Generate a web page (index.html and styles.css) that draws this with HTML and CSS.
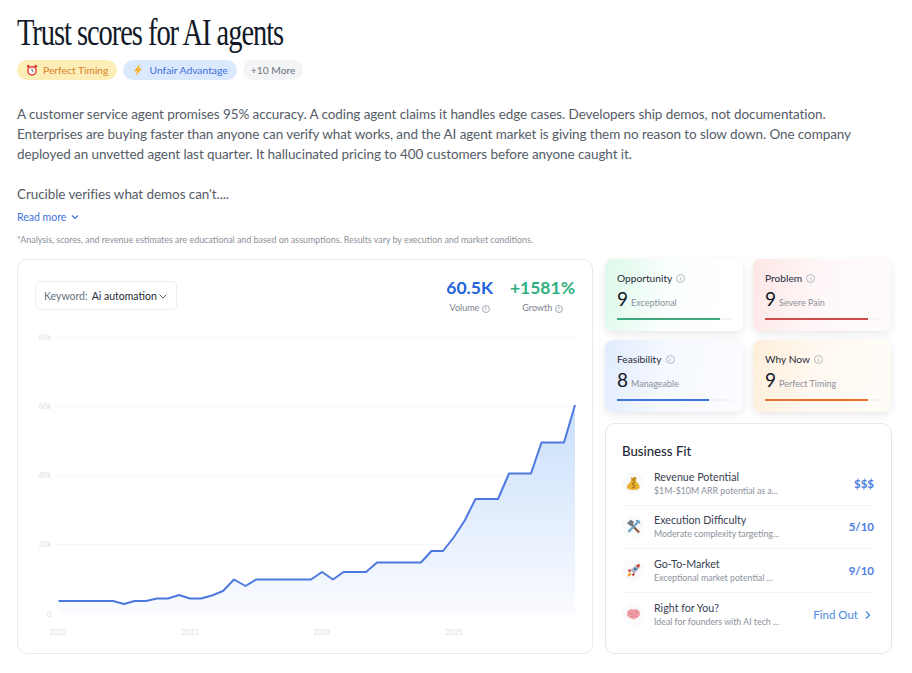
FILE: index.html
```html
<!DOCTYPE html>
<html lang="en">
<head>
  <meta charset="UTF-8">
  <title>Trust scores for AI agents</title>
  <link rel="stylesheet" href="styles.css">
</head>
<body>
  <h1 class="title">Trust scores for AI agents</h1>
  <div class="tags">
    <span class="tag tag-yellow">
      <svg class="tag-icon" viewBox="0 0 16 16"><circle cx="8" cy="9" r="5.5" fill="#fff" stroke="#e2453c" stroke-width="2"/><path d="M8 6v3l2 1.5" fill="none" stroke="#444" stroke-width="1.2"/><circle cx="3" cy="3" r="2" fill="#e2453c"/><circle cx="13" cy="3" r="2" fill="#e2453c"/></svg>
      Perfect Timing
    </span>
    <span class="tag tag-blue">
      <svg class="tag-icon" viewBox="0 0 16 16"><path d="M10.500 0L2.500 9.500h4.500L5 16l8.500-10H9z" fill="#f5b324"/></svg>
      Unfair Advantage
    </span>
    <span class="tag tag-gray">+10 More</span>
  </div>

  <p class="intro">A customer service agent promises 95% accuracy. A coding agent claims it handles edge cases. Developers ship demos, not documentation. Enterprises are buying faster than anyone can verify what works, and the AI agent market is giving them no reason to slow down. One company deployed an unvetted agent last quarter. It hallucinated pricing to 400 customers before anyone caught it.</p>
  <p class="intro intro-last">Crucible verifies what demos can't....</p>
  <a class="read-more">Read more
    <svg class="chev" viewBox="0 0 10 10"><path d="M2 3.500l3 3 3-3" fill="none" stroke="currentColor" stroke-width="1.2"/></svg>
  </a>
  <p class="disclaimer">*Analysis, scores, and revenue estimates are educational and based on assumptions. Results vary by execution and market conditions.</p>

  <div class="main">
    <div class="chart-card">
      <div class="chart-head">
        <div class="keyword">
          <span class="keyword-label">Keyword:</span>
          <span class="keyword-value">Ai automation</span>
          <svg class="chev-gray" viewBox="0 0 10 10"><path d="M1.500 3.500l3.500 3.500 3.500-3.500" fill="none" stroke="#555" stroke-width="0.9"/></svg>
        </div>
        <div class="stats">
          <div class="stat">
            <div class="stat-value blue">60.5K</div>
            <div class="stat-label">Volume <span class="q">?</span></div>
          </div>
          <div class="stat">
            <div class="stat-value green">+1581%</div>
            <div class="stat-label">Growth <span class="q">?</span></div>
          </div>
        </div>
      </div>
      <svg class="chart" viewBox="0 0 574 324" width="574" height="324">
        <defs>
          <linearGradient id="area" x1="0" y1="0" x2="0" y2="1">
            <stop offset="0" stop-color="#c9dffb"/>
            <stop offset="1" stop-color="#fafbfe"/>
          </linearGradient>
        </defs>
        <g transform="translate(-18,-330)">
          <g stroke="#f5f6f8" stroke-width="1">
            <path d="M58 337.500H575M58 406.500H575M58 475.500H575M58 544.500H575"/>
          </g>
          <g class="axis">
            <text x="51" y="340" text-anchor="end">80k</text>
            <text x="51" y="409" text-anchor="end">60k</text>
            <text x="51" y="478" text-anchor="end">40k</text>
            <text x="51" y="547" text-anchor="end">20k</text>
            <text x="51" y="617" text-anchor="end">0</text>
            <text x="58" y="635" text-anchor="middle">2022</text>
            <text x="190" y="635" text-anchor="middle">2023</text>
            <text x="322" y="635" text-anchor="middle">2024</text>
            <text x="454" y="635" text-anchor="middle">2025</text>
          </g>
          <path fill="url(#area)" d="M58.500 601H113L124 604L134.500 601H146L157 598.500H168L179 595L190 598.500H201L212 595.500L223 591L234 579.500L245.500 586L256 579.500H311L322 572L333 579.500L343.500 572H366L377 562.500H421L431.500 551H443L454 537L465 520L475.500 499H498L509 473.500H531L541.500 442.500H564L575 405V614H58.500Z"/>
          <path fill="none" stroke="#4c78e0" stroke-width="2" stroke-linejoin="round" d="M58.500 601H113L124 604L134.500 601H146L157 598.500H168L179 595L190 598.500H201L212 595.500L223 591L234 579.500L245.500 586L256 579.500H311L322 572L333 579.500L343.500 572H366L377 562.500H421L431.500 551H443L454 537L465 520L475.500 499H498L509 473.500H531L541.500 442.500H564L575 405"/>
        </g>
      </svg>
    </div>

    <div class="side">
      <div class="scores">
        <div class="score score-green">
          <div class="score-title">Opportunity <span class="info">i</span></div>
          <div class="score-row"><span class="score-num">9</span><span class="score-text">Exceptional</span></div>
          <div class="bar"><div class="bar-fill" style="width:89%;background:#3fa77c"></div></div>
        </div>
        <div class="score score-red">
          <div class="score-title">Problem <span class="info">i</span></div>
          <div class="score-row"><span class="score-num">9</span><span class="score-text">Severe Pain</span></div>
          <div class="bar"><div class="bar-fill" style="width:89%;background:#cf4b4b"></div></div>
        </div>
        <div class="score score-blue">
          <div class="score-title">Feasibility <span class="info">i</span></div>
          <div class="score-row"><span class="score-num">8</span><span class="score-text">Manageable</span></div>
          <div class="bar"><div class="bar-fill" style="width:79%;background:#3f74dd"></div></div>
        </div>
        <div class="score score-orange">
          <div class="score-title">Why Now <span class="info">i</span></div>
          <div class="score-row"><span class="score-num">9</span><span class="score-text">Perfect Timing</span></div>
          <div class="bar"><div class="bar-fill" style="width:89%;background:#e8702a"></div></div>
        </div>
      </div>

      <div class="fit-card">
        <h2 class="fit-title">Business Fit</h2>
        <div class="fit-row">
          <div class="fit-icon"><svg viewBox="0 0 16 16"><path d="M6 4.500C5 6.500 1.500 8.500 1 11.500c-.4 2.500 2.500 3.500 6.500 3.500 4.500 0 7.500-1 7-4C14 8 11 6.500 10 4.500z" fill="#eab12f"/><path d="M5 1l2 1 2-1.200 2.500 1.200-1.500 2.500H6z" fill="#d1931f"/><path d="M5.500 4.500h5" stroke="#a8701a" stroke-width="1"/><text x="8" y="13" class="bag-sign">$</text></svg></div>
          <div class="fit-text"><div class="fit-name">Revenue Potential</div><div class="fit-desc">$1M-$10M ARR potential as a...</div></div>
          <div class="fit-value">$$$</div>
        </div>
        <div class="fit-row">
          <div class="fit-icon"><svg viewBox="0 0 16 16"><path d="M5 5l9 9.500" stroke="#8a5a3a" stroke-width="2.400" fill="none"/><path d="M1 4.500L5 .8l2.500 1.200 1 2-3.500 3.500z" fill="#6e7c86"/><path d="M12 4L2.500 13.800" stroke="#6aa5c9" stroke-width="2.400" fill="none"/><path d="M10.500 1.200a3.300 3.300 0 0 1 4.500 4.300l-2.300-1.800-1.200 1.200z" fill="#6aa5c9"/></svg></div>
          <div class="fit-text"><div class="fit-name">Execution Difficulty</div><div class="fit-desc">Moderate complexity targeting...</div></div>
          <div class="fit-value">5/10</div>
        </div>
        <div class="fit-row">
          <div class="fit-icon"><svg viewBox="0 0 16 16"><path d="M14.800 1.200c-4.300.3-7.500 2.700-9.500 7L8 11c4.300-2 6.500-5.300 6.800-9.800z" fill="#aab6c4"/><path d="M14.800 1.200c-1.600.1-3 .5-4.300 1.200l3.100 3.100c.7-1.300 1.100-2.700 1.200-4.300z" fill="#d8423a"/><circle cx="9.800" cy="6.400" r="1.400" fill="#3f6fa8"/><path d="M5.800 6.500L1.800 7.800l2.400 2.200zM9.500 10.500L8.300 14.500l-2.400-2.500z" fill="#c9332c"/><path d="M4.200 10.200c-1.700.6-2.400 2.300-2.700 4.300 2-.3 3.700-1 4.300-2.700z" fill="#f3a431"/></svg></div>
          <div class="fit-text"><div class="fit-name">Go-To-Market</div><div class="fit-desc">Exceptional market potential ...</div></div>
          <div class="fit-value">9/10</div>
        </div>
        <div class="fit-row fit-row-last">
          <div class="fit-icon"><svg viewBox="0 0 16 16"><path d="M4 3C5.500 1.500 7 2.300 8 2.800c1-.5 2.500-1.300 4 .2 1.800.3 3 2 2.500 3.700.8 1.600 0 3.500-1.600 4-.7 1.300-2 1.800-3.300 1.300-.3.800-1 1.500-1.600 1.500s-1-.7-1.300-1.500c-1.300.5-2.900 0-3.600-1.300C1.300 10.200.5 8.300 1.300 6.700.8 5 2.200 3.300 4 3z" fill="#f09ca5"/><path d="M3.500 6.500c1.500-.5 3 .2 3 1.500M12.500 6c-1.500-.3-3 .5-2.800 2M5 10.500c1-.8 2-.8 3 0M10 10c.8-.3 1.500 0 2 .5" stroke="#d9707d" stroke-width=".8" fill="none"/></svg></div>
          <div class="fit-text"><div class="fit-name">Right for You?</div><div class="fit-desc">Ideal for founders with AI tech ...</div></div>
          <a class="find-out">Find Out <svg class="find-chev" viewBox="0 0 10 10"><path d="M3 1.500L6.500 5 3 8.500" fill="none" stroke="currentColor" stroke-width="1.400"/></svg></a>
        </div>
      </div>
    </div>
  </div>
</body>
</html>
```
FILE: styles.css
```css
body {
  margin: 0;
  padding: 0 20px 0 17px;
  background-color: #fff;
  font-family: 'Lato', sans-serif;
  color: #4b5563;
}

.title {
  margin: 0;
  padding-top: 12px;
  font-family: 'Liberation Serif', serif;
  font-weight: 400;
  font-size: 38px;
  line-height: 40px;
  letter-spacing: -1.4px;
  color: #111827;
  transform: scaleX(0.75);
  transform-origin: left;
  white-space: nowrap;
}

.tags {
  display: flex;
  gap: 6px;
  margin-top: 8px;
}

.tag {
  display: flex;
  align-items: center;
  gap: 5px;
  height: 20px;
  padding: 0 9px;
  border-radius: 10px;
  font-size: 10.3px;
}

.tag-icon {
  width: 12px;
  height: 12px;
}

.tag-yellow {
  background-color: #fdeeb8;
  color: #d9822b;
}

.tag-blue {
  background-color: #dbe9fe;
  color: #3f6fdc;
}

.tag-gray {
  padding: 0 8px;
  background-color: #f3f4f6;
  color: #6b7280;
}

.intro {
  margin: 24px 0 0;
  font-size: 13.5px;
  line-height: 20px;
  letter-spacing: -0.08px;
  color: #555c67;
}

.intro-last {
  margin-top: 20px;
}

.read-more {
  display: flex;
  align-items: center;
  gap: 4px;
  margin-top: 5px;
  font-size: 10.5px;
  line-height: 16px;
  color: #3f74dd;
}

.chev {
  width: 10px;
  height: 10px;
}

.disclaimer {
  margin: 9px 0 0;
  font-size: 8.9px;
  line-height: 12px;
  color: #8b919b;
}

.main {
  display: flex;
  gap: 12px;
  margin-top: 13px;
}

.chart-card {
  box-sizing: border-box;
  flex: none;
  width: 576px;
  height: 395px;
  border: 1px solid #e8eaee;
  border-radius: 10px;
  overflow: hidden;
}

.chart-head {
  display: flex;
  justify-content: space-between;
  padding: 18px 17px 0;
  height: 52px;
}

.keyword {
  display: flex;
  align-items: center;
  box-sizing: border-box;
  height: 29px;
  margin-top: 3px;
  padding: 0 8px;
  border: 1px solid #eceef1;
  border-radius: 5px;
  font-size: 10.5px;
}

.keyword-label {
  margin-right: 4px;
  color: #6b7280;
}

.keyword-value {
  margin-right: 1px;
  color: #1f2937;
}

.chev-gray {
  width: 10px;
  height: 10px;
}

.stats {
  display: flex;
  gap: 17px;
  text-align: center;
}

.stat-value {
  font-size: 17.5px;
  line-height: 20px;
  font-weight: 700;
}

.blue {
  color: #2563d9;
}

.green {
  color: #2fb07f;
}

.stat-label {
  margin-top: 4px;
  font-size: 9px;
  line-height: 12px;
  color: #7b818b;
}

.q {
  display: inline-block;
  box-sizing: border-box;
  width: 8px;
  height: 8px;
  border: 1px solid #a5abb4;
  border-radius: 50%;
  font-size: 5px;
  line-height: 6px;
  text-align: center;
}

.chart {
  display: block;
}

.axis {
  font-size: 7.5px;
  fill: #dde0e5;
}

.side {
  display: flex;
  flex-direction: column;
  gap: 11px;
  width: 287px;
}

.scores {
  display: grid;
  grid-template-columns: 138px 138px;
  gap: 9px 10px;
}

.score {
  box-sizing: border-box;
  height: 72px;
  padding: 12px 12px 0;
  border-radius: 8px;
  box-shadow: 0 3px 8px rgba(0, 0, 0, 0.09);
}

.score-green {
  background: linear-gradient(100deg, #dcf8e9, #fbfffd 45%, #ffffff);
}

.score-red {
  background: linear-gradient(100deg, #fde6e6, #fff7f7 45%, #fffbfb);
}

.score-blue {
  background: linear-gradient(100deg, #e2ecfd, #f6f9ff 45%, #fbfcff);
}

.score-orange {
  background: linear-gradient(100deg, #fdeeda, #fff9f1 45%, #fffcf8);
}

.score-title {
  display: flex;
  align-items: center;
  gap: 4px;
  font-size: 10.2px;
  line-height: 14px;
  color: #1f2937;
}

.info {
  box-sizing: border-box;
  width: 9px;
  height: 9px;
  border: 1px solid #b4b9c1;
  border-radius: 50%;
  font-size: 6px;
  line-height: 7px;
  text-align: center;
  color: #8b919b;
}

.score-row {
  display: flex;
  align-items: baseline;
  gap: 3px;
  margin-top: 2px;
}

.score-num {
  font-size: 19px;
  line-height: 24px;
  color: #111827;
}

.score-text {
  font-size: 9px;
  color: #8b919b;
}

.bar {
  height: 2px;
  margin-top: 7px;
  width: 116px;
  background-color: #f3f4f6;
}

.bar-fill {
  height: 100%;
}

.fit-card {
  box-sizing: border-box;
  height: 231px;
  padding: 18px 17px 0 16px;
  border: 1px solid #e5e7eb;
  border-radius: 10px;
}

.fit-title {
  margin: 0 0 2px;
  font-size: 13.2px;
  line-height: 18px;
  font-weight: 500;
  color: #1f2937;
}

.fit-row {
  box-sizing: border-box;
  display: flex;
  align-items: center;
  height: 43.6px;
  border-bottom: 1px solid #f3f4f6;
}

.fit-row-last {
  border-bottom: none;
}

.fit-icon {
  display: flex;
  align-items: center;
  justify-content: center;
  width: 22px;
  height: 22px;
  margin-right: 10px;
  border-radius: 50%;
  background-color: #f9fafb;
}

.fit-icon svg {
  width: 15px;
  height: 15px;
}

.bag-sign {
  font-size: 7px;
  text-anchor: middle;
  fill: #9a6a12;
}

.fit-text {
  flex: 1;
}

.fit-name {
  font-size: 10.7px;
  line-height: 14px;
  color: #374151;
}

.fit-desc {
  font-size: 8.8px;
  line-height: 13px;
  color: #8b919b;
}

.fit-value {
  font-size: 11.5px;
  font-weight: 700;
  color: #4a7de0;
}

.find-out {
  display: flex;
  align-items: center;
  gap: 5px;
  margin-right: 1px;
  font-size: 11.5px;
  color: #4a8be0;
}

.find-chev {
  width: 10px;
  height: 10px;
}
```
